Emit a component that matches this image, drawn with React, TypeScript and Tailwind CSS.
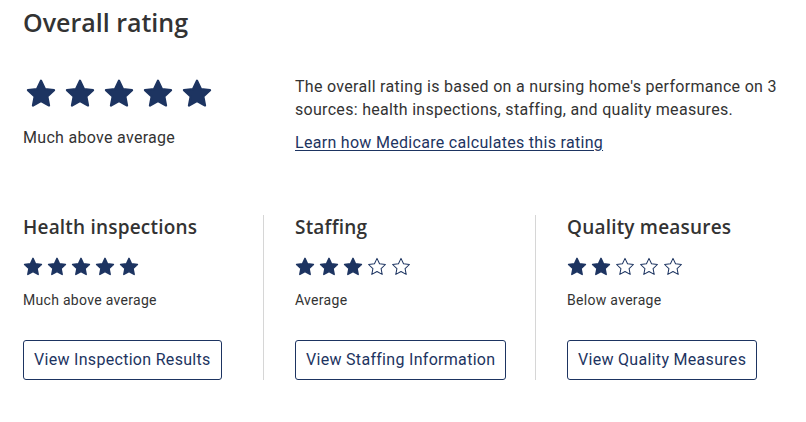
import React from 'react';

const STAR = 'M12 2.6l2.76 5.9 6.44.78-4.74 4.44 1.2 6.38L12 16.96 6.34 20.1l1.2-6.38L2.8 9.28l6.44-.78z';

function Star({ filled, size }: { filled: boolean; size: number }) {
  return (
    <svg width={size} height={size} viewBox="0 0 24 24" className="shrink-0">
      <path
        d={STAR}
        fill={filled ? '#1d3461' : 'none'}
        stroke="#1d3461"
        strokeWidth={filled ? 1.6 : 1.1}
        strokeLinejoin="round"
      />
    </svg>
  );
}

function Stars({ count, size, gap }: { count: number; size: number; gap: string }) {
  return (
    <div className={`flex ${gap}`}>
      {[1, 2, 3, 4, 5].map(i => (
        <Star key={i} filled={i <= count} size={size} />
      ))}
    </div>
  );
}

interface Measure { title: string; stars: number; label: string; button: string; }

const measures: Measure[] = [
  { title: 'Health inspections', stars: 5, label: 'Much above average', button: 'View Inspection Results' },
  { title: 'Staffing', stars: 3, label: 'Average', button: 'View Staffing Information' },
  { title: 'Quality measures', stars: 2, label: 'Below average', button: 'View Quality Measures' },
];

const heading = { fontFamily: '"Open Sans", "DejaVu Sans", sans-serif' };

export default function App() {
  return (
    <div className="h-[422px] w-[806px] overflow-hidden bg-white pl-[23px] text-[#333333]" style={{ fontFamily: 'Roboto, "Noto Sans", sans-serif' }}>
      <h1 className="pt-[6px] text-[25px] font-semibold leading-[32px] text-[#333333]" style={heading}>
        Overall rating
      </h1>

      <div className="mt-[37px] flex">
        <div className="w-[272px]">
          <div className="pl-[1px] pt-[2px]">
            <Stars count={5} size={34} gap="gap-[5px]" />
          </div>
          <p className="mt-[16px] text-[16px] leading-[22px] tracking-[0.3px]">Much above average</p>
        </div>
        <div className="w-[500px]">
          <p className="text-[16px] leading-[23px] tracking-[0.3px]">
            The overall rating is based on a nursing home's performance on 3 sources: health inspections, staffing, and quality measures.
          </p>
          <a href="#" className="mt-[11px] inline-block text-[16px] leading-[22px] tracking-[0.3px] text-[#1d3461] underline underline-offset-2">
            Learn how Medicare calculates this rating
          </a>
        </div>
      </div>

      <div className="mt-[60px] flex">
        {measures.map(m => (
          <div key={m.title} className="w-[272px] shrink-0">
            <div className={`w-[241px] ${m.title === 'Quality measures' ? '' : 'border-r border-[#d6d6d6]'}`}>
              <h2 className="text-[19px] font-semibold leading-[24px] tracking-[0.2px] text-[#333333]" style={heading}>{m.title}</h2>
              <div className="mt-[17px] -ml-[1px]">
                <Stars count={m.stars} size={22} gap="gap-[2px]" />
              </div>
              <p className="mt-[12px] text-[14px] leading-[20px] tracking-[0.3px]">{m.label}</p>
              <button className="mt-[30px] h-[40px] rounded-[3px] border border-[#1d3461] px-[10px] text-[16px] tracking-[0.3px] text-[#1d3461]">
                {m.button}
              </button>
            </div>
          </div>
        ))}
      </div>
    </div>
  );
}
